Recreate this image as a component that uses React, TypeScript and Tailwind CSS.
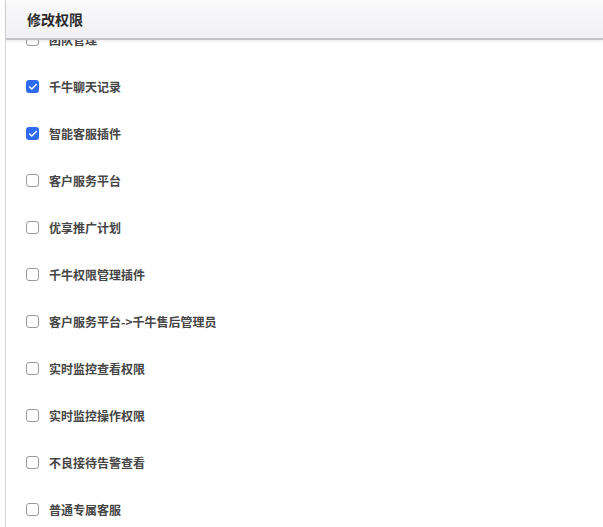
import { Check } from "lucide-react";

type Perm = { label: string; checked: boolean };

const perms: Perm[] = [
  { label: "团队管理", checked: false },
  { label: "千牛聊天记录", checked: true },
  { label: "智能客服插件", checked: true },
  { label: "客户服务平台", checked: false },
  { label: "优享推广计划", checked: false },
  { label: "千牛权限管理插件", checked: false },
  { label: "客户服务平台->千牛售后管理员", checked: false },
  { label: "实时监控查看权限", checked: false },
  { label: "实时监控操作权限", checked: false },
  { label: "不良接待告警查看", checked: false },
  { label: "普通专属客服", checked: false },
];

function Box({ checked }: { checked: boolean }) {
  return checked ? (
    <span className="flex h-[13px] w-[13px] items-center justify-center rounded-[3px] bg-[#2f6bf0]">
      <Check className="h-[10px] w-[10px] text-white" strokeWidth={3.5} />
    </span>
  ) : (
    <span className="h-[13px] w-[13px] rounded-[3px] border border-[#9a9a9a] bg-white" />
  );
}

export default function App() {
  return (
    <div
      className="h-[527px] w-[603px] overflow-hidden bg-white pl-[5px]"
      style={{ fontFamily: '"Noto Sans CJK SC", "Noto Sans", sans-serif' }}
    >
      <div className="relative h-full border-l border-[#d4d4d4]">
        <div className="absolute left-0 right-0 top-0 z-10 flex h-[40px] items-center border-b-2 border-[#c4c4c8] bg-gradient-to-b from-[#fbfbfc] to-[#f0f0f4] pl-[21px] shadow-[0_1px_3px_rgba(0,0,0,0.1)]">
          <span className="text-[14px] font-semibold text-[#2b2b2b]">修改权限</span>
        </div>
        <ul className="pt-[16px]">
          {perms.map((p) => (
            <li key={p.label} className="flex h-[47px] items-center gap-[10px] pl-[20px]">
              <Box checked={p.checked} />
              <span className="text-[12px] font-semibold text-[#454545]">{p.label}</span>
            </li>
          ))}
        </ul>
      </div>
    </div>
  );
}
